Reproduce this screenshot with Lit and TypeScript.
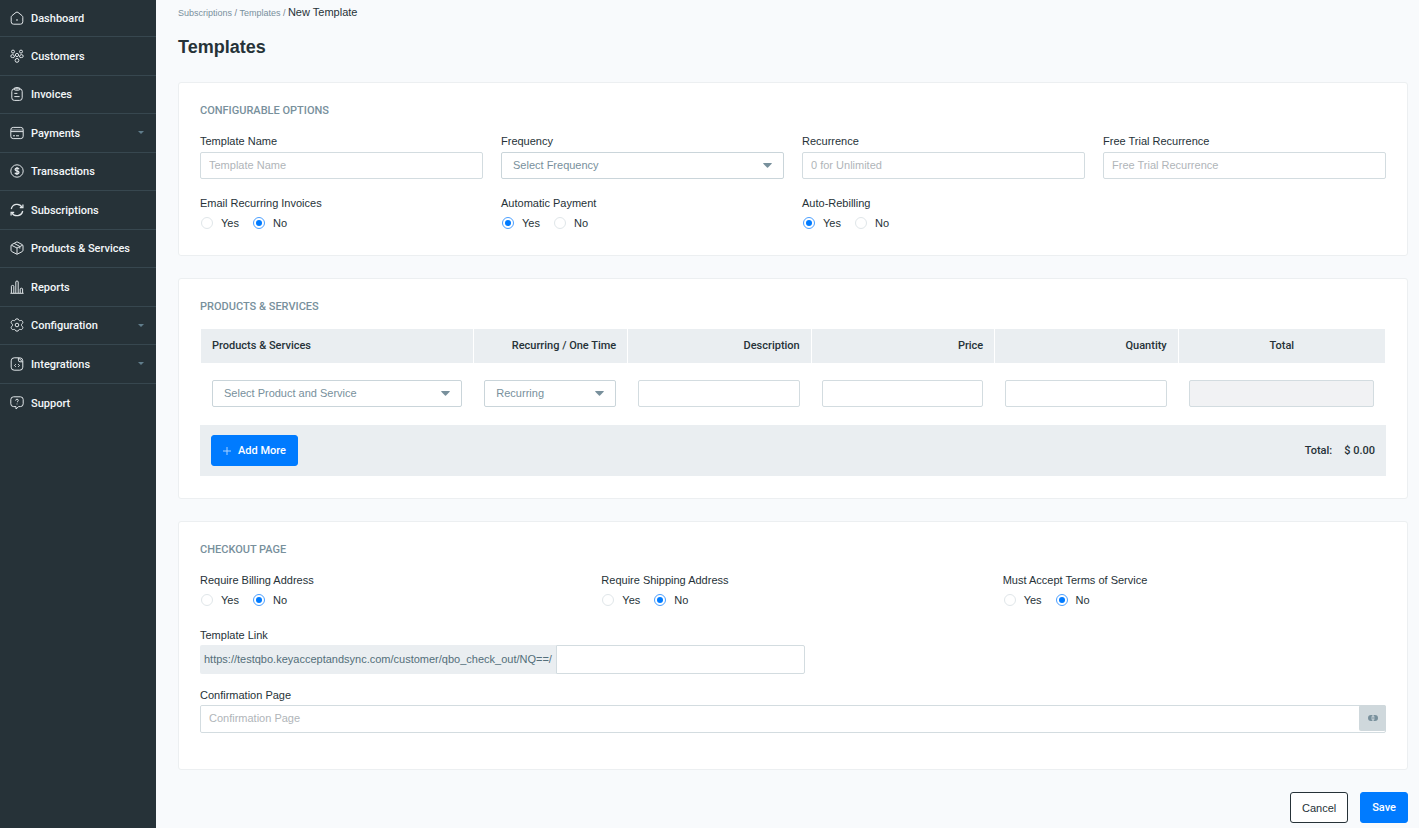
import { LitElement, html, css, svg, nothing, TemplateResult, SVGTemplateResult } from "lit";
import { customElement, property } from "lit/decorators.js";

const icons: Record<string, SVGTemplateResult> = {
  dashboard: svg`<path d="M1.2 6.3 Q1.2 5.2 2 4.6 L6 1.4 Q7 .7 8 1.4 L12 4.6 Q12.8 5.2 12.8 6.3 V10.8 Q12.8 13.2 10.4 13.2 H3.6 Q1.2 13.2 1.2 10.8 Z"/><path d="M7 8 V10"/>`,
  customers: svg`<circle cx="3" cy="2.6" r="1.5"/><circle cx="11" cy="2.6" r="1.5"/><circle cx="7" cy="6" r="1.6"/><circle cx="7" cy="11.4" r="1.9"/><path d="M4.6 8.2 Q4.4 5.6 2.6 5.6 Q.8 5.6 .8 7.2 Q.8 8.6 2.6 8.6 H4.2"/><path d="M9.4 8.2 Q9.6 5.6 11.4 5.6 Q13.2 5.6 13.2 7.2 Q13.2 8.6 11.4 8.6 H9.8"/>`,
  invoices: svg`<rect x="1.8" y="1.8" width="10.4" height="11.6" rx="2.6"/><rect x="4.2" y=".6" width="5.6" height="2.6" rx="1.2"/><path d="M4.3 6.4 H7.4 M4.3 9.6 H9.6"/>`,
  payments: svg`<rect x=".8" y="1.4" width="12.4" height="11.2" rx="2.4"/><path d="M1 4 H13" opacity=".6"/><path d="M1 5.6 H13"/><path d="M3 9.8 H5 M6 9.8 H9"/>`,
  transactions: svg`<circle cx="7" cy="7" r="6.2"/><path stroke-width="1.3" d="M9 5.2 Q8.6 4.2 7 4.2 Q5.1 4.2 5.1 5.6 Q5.1 6.7 7 7 Q9 7.3 9 8.5 Q9 9.9 7 9.9 Q5.3 9.9 4.9 8.8 M7 3 V11"/>`,
  subscriptions: svg`<path stroke-width="1.3" d="M1.3 6 A5.8 5.8 0 0 1 12 4.2 M12.7 8 A5.8 5.8 0 0 1 2 9.8"/><path stroke-width="1.3" d="M12.9 1.6 V4.7 H9.8 M1.1 12.4 V9.3 H4.2"/>`,
  products: svg`<path d="M7 .8 L12.2 3.6 Q13 4 13 5 V9.2 Q13 10.2 12.2 10.6 L7 13.3 L1.8 10.6 Q1 10.2 1 9.2 V5 Q1 4 1.8 3.6 Z"/><path d="M1.4 4.2 L7 7 L12.6 4.2 M7 7 V13 M4.2 2.4 L9.8 5.4 V7.6"/>`,
  reports: svg`<path d="M.4 13.3 H13.6 M1.4 13 V6.2 Q1.4 5.4 2.6 5.4 Q3.8 5.4 3.8 6.2 V13 M5.8 13 V2 Q5.8 1 7 1 Q8.2 1 8.2 2 V13 M10.2 13 V9 Q10.2 8.2 11.4 8.2 Q12.6 8.2 12.6 9 V13"/>`,
  configuration: svg`<circle cx="7" cy="7" r="1.8"/><path d="M5.2 2.2 Q5.4 .8 7 .8 Q8.6 .8 8.8 2.2 Q9.4 2.9 10.4 2.5 Q11.8 2.1 12.6 3.4 Q13.3 4.8 12.2 5.7 Q11.4 6.3 11.4 7 Q11.4 7.7 12.2 8.3 Q13.3 9.2 12.6 10.6 Q11.8 11.9 10.4 11.5 Q9.4 11.1 8.8 11.8 Q8.6 13.2 7 13.2 Q5.4 13.2 5.2 11.8 Q4.6 11.1 3.6 11.5 Q2.2 11.9 1.4 10.6 Q.7 9.2 1.8 8.3 Q2.6 7.7 2.6 7 Q2.6 6.3 1.8 5.7 Q.7 4.8 1.4 3.4 Q2.2 2.1 3.6 2.5 Q4.6 2.9 5.2 2.2 Z"/>`,
  integrations: svg`<path d="M4.2 .8 H9.8 Q12.8 .8 12.8 3.8 V10.2 Q12.8 13.2 9.8 13.2 H4.2 Q1.2 13.2 1.2 10.2 V3.8 Q1.2 .8 4.2 .8 Z M8.4 1 V3.2 Q8.4 4.8 10 4.8 H12.6 M9 1.4 L12.4 4.6"/><path d="M5.8 7.2 L4.5 8.5 L5.8 9.8 M8.2 7.2 L9.5 8.5 L8.2 9.8"/>`,
  support: svg`<path d="M3.6 .8 H10.4 Q13.2 .8 13.2 3.6 V7.8 Q13.2 10.6 10.4 10.6 H8.6 L6 13 V10.6 H3.6 Q.8 10.6 .8 7.8 V3.6 Q.8 .8 3.6 .8 Z"/><path d="M5.7 4.6 Q5.8 3.2 7 3.2 Q8.3 3.2 8.3 4.4 Q8.3 5.3 7 6.2 M7 7.6 V8.4"/>`,
};

const navItems: { id: string; label: string; sub?: boolean }[] = [
  { id: "dashboard", label: "Dashboard" },
  { id: "customers", label: "Customers" },
  { id: "invoices", label: "Invoices" },
  { id: "payments", label: "Payments", sub: true },
  { id: "transactions", label: "Transactions" },
  { id: "subscriptions", label: "Subscriptions" },
  { id: "products", label: "Products & Services" },
  { id: "reports", label: "Reports" },
  { id: "configuration", label: "Configuration", sub: true },
  { id: "integrations", label: "Integrations", sub: true },
  { id: "support", label: "Support" },
];

@customElement("side-nav")
class SideNav extends LitElement {
  static styles = css`
    :host {
      display: block;
      flex: none;
      width: 156px;
      background: #263238;
    }
    ul {
      display: grid;
      grid-template-rows: 37px repeat(10, 1fr);
      height: 422px;
      margin: 0;
      padding: 0;
      list-style: none;
    }
    li {
      display: flex;
      border-bottom: 1px solid #37474f;
    }
    li:last-child {
      border-bottom: 0;
    }
    a {
      flex: 1;
      display: flex;
      align-items: center;
      gap: 7px;
      padding: 0 12px 0 10px;
      color: #f3f7f9;
      font: 500 11px/16px Roboto, "Liberation Sans", sans-serif;
      text-decoration: none;
    }
    .icon {
      width: 14px;
      height: 14px;
      fill: none;
      stroke: #e0e5e8;
      stroke-width: 1;
      overflow: visible;
    }
    .label {
      flex: 1;
      padding-top: 2px;
    }
    .caret {
      width: 6px;
      height: 3px;
      fill: #607d8b;
    }
  `;

  render() {
    return html`<nav aria-label="Main">
      <ul>
        ${navItems.map(
          (item) => html`<li>
            <a href="#${item.id}">
              <svg class="icon" viewBox="0 0 14 14" aria-hidden="true">${icons[item.id]}</svg>
              <span class="label">${item.label}</span>
              ${item.sub
                ? html`<svg class="caret" viewBox="0 0 6 3" aria-hidden="true"><path d="M0 0 H6 L3 3 Z" /></svg>`
                : nothing}
            </a>
          </li>`
        )}
      </ul>
    </nav>`;
  }
}

@customElement("yes-no")
class YesNo extends LitElement {
  @property() legend = "";
  @property() name = "";
  @property() value = "No";

  static styles = css`
    fieldset {
      margin: 0;
      padding: 0;
      border: 0;
      min-width: 0;
    }
    legend {
      padding: 0 0 4px;
    }
    .options {
      display: flex;
      gap: 14px;
      padding-left: 1px;
    }
    label {
      display: flex;
      align-items: center;
      gap: 8px;
    }
    input {
      appearance: none;
      box-sizing: border-box;
      width: 12px;
      height: 12px;
      margin: 0;
      padding: 2px;
      border: 1px solid #e0e6e9;
      border-radius: 50%;
      background: #fff;
    }
    input:checked {
      border-color: #4a9fff;
      background: #007bff content-box;
    }
  `;

  render() {
    return html`<fieldset>
      <legend>${this.legend}</legend>
      <div class="options">
        ${["Yes", "No"].map(
          (option) => html`<label>
            <input type="radio" name=${this.name} value=${option} ?checked=${option === this.value} />${option}
          </label>`
        )}
      </div>
    </fieldset>`;
  }
}

@customElement("app-root")
class AppRoot extends LitElement {
  static styles = css`
    :host {
      display: flex;
      min-height: 100vh;
      background: #f8fafc;
      color: #263238;
      font: 11px/16px "Liberation Sans", Arial, sans-serif;
    }
    * {
      box-sizing: border-box;
    }
    main {
      flex: 1;
      min-width: 0;
      padding: 4px 11px 5px 22px;
    }
    .crumbs {
      display: block;
      color: #76838f;
      font-size: 9px;
    }
    .crumbs a {
      color: #78909c;
      text-decoration: none;
    }
    .crumbs b {
      color: #263238;
      font-size: 11px;
      font-weight: 400;
    }
    h1 {
      margin: 14px 0 23px;
      font: 700 18px/24px "Liberation Sans", Arial, sans-serif;
    }
    .card {
      margin-bottom: 22px;
      padding: 20px 21px 24px;
      border: 1px solid #eceff1;
      border-radius: 3px;
      background: #fff;
    }
    .card.items {
      padding-bottom: 22px;
    }
    .card.checkout {
      padding-bottom: 36px;
    }
    h2 {
      margin: 0 0 14px;
      color: #78909c;
      font: 500 11px/16px Roboto, "Liberation Sans", sans-serif;
    }
    .grid {
      display: grid;
      gap: 16px 18px;
    }
    .four {
      grid-template-columns: repeat(4, 1fr);
    }
    .three {
      grid-template-columns: repeat(3, 1fr);
    }
    .field {
      display: grid;
      gap: 3px;
    }
    .link {
      width: 51%;
      margin-top: 19px;
      gap: 2px;
    }
    .confirm {
      margin-top: 13px;
      gap: 2px;
    }
    input,
    select {
      width: 100%;
      min-width: 0;
      height: 27px;
      margin: 0;
      padding: 0 8px 2px;
      border: 1px solid #d3dce0;
      border-radius: 2px;
      background: #fff;
      color: #78909c;
      font: inherit;
    }
    input::placeholder {
      color: #b0b5b9;
      opacity: 1;
    }
    input:disabled {
      background: #f1f2f4;
    }
    select {
      grid-area: 1 / 1;
      appearance: none;
      padding: 0 24px 2px 11px;
      border-color: #cad5da;
    }
    .select {
      display: grid;
      align-items: center;
    }
    .select svg {
      grid-area: 1 / 1;
      justify-self: end;
      width: 9px;
      height: 5px;
      margin-right: 12px;
      fill: #78909c;
      pointer-events: none;
    }
    .scroll {
      padding: 0 1px;
    }
    table {
      width: 100%;
      table-layout: fixed;
      border-collapse: separate;
      border-spacing: 0;
    }
    .wide {
      width: 23%;
    }
    .kind {
      width: 13%;
    }
    .amount {
      width: 15.5%;
    }
    th {
      height: 34px;
      padding: 0 11px;
      border-left: 1px solid #fff;
      background: #eaeef1;
      font: 500 11px/16px Roboto, "Liberation Sans", sans-serif;
      text-align: right;
    }
    th:first-child {
      border-left: 0;
      text-align: left;
    }
    th:last-child {
      text-align: center;
    }
    td {
      padding: 17px 11px 18px;
    }
    .summary {
      display: flex;
      align-items: center;
      justify-content: space-between;
      padding: 10px 11px;
      background: #eaeef1;
    }
    .sum {
      display: flex;
      gap: 12px;
      font: 500 11px/16px Roboto, "Liberation Sans", sans-serif;
    }
    button {
      display: flex;
      align-items: center;
      gap: 7px;
      height: 31px;
      margin: 0;
      padding: 0 11px;
      border: 1px solid #007bff;
      border-radius: 3px;
      background: #007bff;
      color: #fff;
      font: 500 11px/16px Roboto, "Liberation Sans", sans-serif;
    }
    button.plain {
      border-color: #263238;
      background: #fff;
      color: #263238;
      font: 11px/16px "Liberation Sans", Arial, sans-serif;
    }
    .plus {
      width: 8px;
      height: 8px;
      stroke: #a9d2ff;
    }
    .url {
      display: flex;
    }
    .url span {
      flex: none;
      padding: 6px 4px 7px;
      white-space: nowrap;
      border-radius: 2px 0 0 2px;
      background: #eaeef1;
      color: #546e7a;
    }
    .url input {
      flex: 1;
      height: 29px;
      border-radius: 0 2px 2px 0;
    }
    .group {
      display: flex;
      height: 28px;
      border: 1px solid #d3dce0;
      border-radius: 2px;
    }
    .group input {
      flex: 1;
      height: 26px;
      border: 0;
    }
    .group button {
      flex: none;
      justify-content: center;
      width: 27px;
      height: 26px;
      margin: -1px -1px 0 0;
      padding: 0;
      border: 0;
      border-radius: 2px;
      background: #cfd8dc;
    }
    .chain {
      width: 10px;
      height: 6px;
      fill: #78909c;
    }
    .actions {
      display: flex;
      justify-content: flex-end;
      gap: 12px;
    }
  `;

  private input(id: string, label: string, placeholder: string): TemplateResult {
    return html`<div class="field">
      <label for=${id}>${label}</label>
      <input id=${id} type="text" placeholder=${placeholder} />
    </div>`;
  }

  private select(id: string, options: string[], label?: string): TemplateResult {
    return html`<div class="select">
      <select id=${id} aria-label=${label ?? nothing}>
        ${options.map((o) => html`<option>${o}</option>`)}
      </select>
      <svg viewBox="0 0 9 5" aria-hidden="true"><path d="M0.5 0 H8.5 Q9 .4 8.7 .8 L5 4.6 Q4.5 5 4 4.6 L.3 .8 Q0 .4 .5 0 Z" /></svg>
    </div>`;
  }

  render() {
    return html`
      <side-nav></side-nav>
      <main>
        <nav class="crumbs" aria-label="Breadcrumb">
          <a href="#subscriptions">Subscriptions</a> / <a href="#templates">Templates</a> / <b>New Template</b>
        </nav>
        <h1>Templates</h1>

        <section class="card">
          <h2>CONFIGURABLE OPTIONS</h2>
          <div class="grid four">
            ${this.input("name", "Template Name", "Template Name")}
            <div class="field">
              <label for="frequency">Frequency</label>
              ${this.select("frequency", ["Select Frequency"])}
            </div>
            ${this.input("recurrence", "Recurrence", "0 for Unlimited")}
            ${this.input("trial", "Free Trial Recurrence", "Free Trial Recurrence")}
            <yes-no legend="Email Recurring Invoices" name="email"></yes-no>
            <yes-no legend="Automatic Payment" name="auto" value="Yes"></yes-no>
            <yes-no legend="Auto-Rebilling" name="rebill" value="Yes"></yes-no>
          </div>
        </section>

        <section class="card items">
          <h2>PRODUCTS &amp; SERVICES</h2>
          <div class="scroll">
            <table>
              <thead>
                <tr>
                  <th class="wide" scope="col">Products &amp; Services</th>
                  <th class="kind" scope="col">Recurring / One Time</th>
                  <th class="amount" scope="col">Description</th>
                  <th class="amount" scope="col">Price</th>
                  <th class="amount" scope="col">Quantity</th>
                  <th scope="col">Total</th>
                </tr>
              </thead>
              <tbody>
                <tr>
                  <td>${this.select("product", ["Select Product and Service"], "Product or service")}</td>
                  <td>${this.select("kind", ["Recurring", "One Time"], "Recurring or one time")}</td>
                  <td><input type="text" aria-label="Description" /></td>
                  <td><input type="text" aria-label="Price" /></td>
                  <td><input type="text" aria-label="Quantity" /></td>
                  <td><input type="text" aria-label="Total" disabled /></td>
                </tr>
              </tbody>
            </table>
          </div>
          <div class="summary">
            <button type="button">
              <svg class="plus" viewBox="0 0 8 8" aria-hidden="true"><path d="M4 0 V8 M0 4 H8" /></svg>Add More
            </button>
            <div class="sum"><span>Total:</span><span>$ 0.00</span></div>
          </div>
        </section>

        <section class="card checkout">
          <h2>CHECKOUT PAGE</h2>
          <div class="grid three">
            <yes-no legend="Require Billing Address" name="billing"></yes-no>
            <yes-no legend="Require Shipping Address" name="shipping"></yes-no>
            <yes-no legend="Must Accept Terms of Service" name="terms"></yes-no>
          </div>
          <div class="field link">
            <label for="link">Template Link</label>
            <div class="url">
              <span>https://testqbo.keyacceptandsync.com/customer/qbo_check_out/NQ==/</span>
              <input id="link" type="text" />
            </div>
          </div>
          <div class="field confirm">
            <label for="confirmation">Confirmation Page</label>
            <div class="group">
              <input id="confirmation" type="text" placeholder="Confirmation Page" />
              <button type="button" aria-label="Insert link">
                <svg class="chain" viewBox="0 0 10 6" aria-hidden="true">
                  <path d="M4.4 0 H3 A3 3 0 0 0 3 6 H4.4 V4.4 H3.4 V1.6 H4.4 Z M5.6 0 H7 A3 3 0 0 1 7 6 H5.6 V4.4 H6.6 V1.6 H5.6 Z M3.2 2.4 H6.8 V3.6 H3.2 Z" />
                </svg>
              </button>
            </div>
          </div>
        </section>

        <div class="actions">
          <button class="plain" type="button">Cancel</button>
          <button type="button">Save</button>
        </div>
      </main>
    `;
  }
}
